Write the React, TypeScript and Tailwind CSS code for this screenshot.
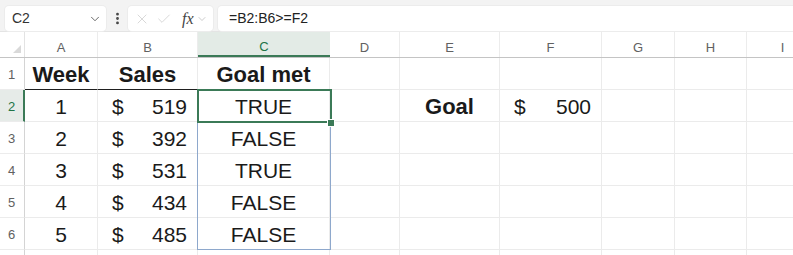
import React from "react";
import { ChevronDown, EllipsisVertical, X, Check } from "lucide-react";

const cols = [
  { key: "A", w: "w-[73px]" },
  { key: "B", w: "w-[100px]" },
  { key: "C", w: "w-[132px]" },
  { key: "D", w: "w-[70px]" },
  { key: "E", w: "w-[100px]" },
  { key: "F", w: "w-[102px]" },
  { key: "G", w: "w-[73px]" },
  { key: "H", w: "w-[72px]" },
  { key: "I", w: "w-[72px]" },
];

const data = [
  [1, 519, "TRUE"],
  [2, 392, "FALSE"],
  [3, 531, "TRUE"],
  [4, 434, "FALSE"],
  [5, 485, "FALSE"],
];

const Money = ({ v }: { v: number }) => (
  <div className="flex h-full items-center justify-between pl-[14px] pr-[10px] pt-[2px]">
    <span>$</span>
    <span>{v}</span>
  </div>
);

const Cell = ({
  w,
  children,
  className = "",
}: {
  w: string;
  children?: React.ReactNode;
  className?: string;
}) => (
  <div className={`${w} shrink-0 h-full border-r border-b border-[#ebebeb] ${className}`}>
    {children}
  </div>
);

const RowHead = ({ n, active }: { n?: number; active?: boolean }) => (
  <div
    className={`w-[25px] shrink-0 h-full flex items-center pl-[8px] pt-[3px] text-[13px] ${
      active
        ? "bg-[#e6ebe8] text-[#217346] border-r-2 border-[#3b7a57]"
        : "text-[#616161] border-r border-[#d4d4d4]"
    } border-b border-b-[#ececec]`}
  >
    {n}
  </div>
);

export default function App() {
  return (
    <div className="w-[793px] h-[255px] overflow-hidden bg-white font-['Liberation_Sans',Arial,sans-serif] text-[#1a1a1a]">
      {/* formula bar */}
      <div className="h-[32px] bg-[#f3f3f3] pt-[6px] flex items-start border-b border-[#e4e4e4]">
        <div className="ml-[5px] w-[101px] h-[25px] rounded-[4px] bg-white shadow-[0_0_0_1px_#ececec] flex items-center justify-between pl-[7px] pr-[4px]">
          <span className="text-[14px] text-[#333]">C2</span>
          <ChevronDown size={14} strokeWidth={1.5} className="text-[#555]" />
        </div>
        <div className="w-[22px] h-[25px] flex items-center justify-center">
          <EllipsisVertical size={15} strokeWidth={2.5} className="text-[#444]" />
        </div>
        <div className="w-[85px] h-[25px] rounded-[4px] bg-white shadow-[0_0_0_1px_#ececec] flex items-center pl-[6px] gap-[6px]">
          <X size={16} strokeWidth={1} className="text-[#c4c4c4]" />
          <Check size={16} strokeWidth={1} className="text-[#c4c4c4]" />
          <span className="ml-[4px] font-['Liberation_Serif',serif] italic text-[16px] text-[#444]">
            fx
          </span>
          <ChevronDown size={12} strokeWidth={1.2} className="-ml-[4px] text-[#aaa]" />
        </div>
        <div className="ml-[5px] flex-1 h-[25px] rounded-l-[4px] bg-white shadow-[0_0_0_1px_#ececec] flex items-center pl-[11px]">
          <span className="text-[14px] text-[#222]">=B2:B6&gt;=F2</span>
        </div>
      </div>

      {/* column headers */}
      <div className="flex h-[26px] border-b border-[#c4c4c4]">
        <div className="w-[25px] shrink-0 h-full flex items-end justify-end pr-[3px] pb-[4px] border-r border-[#e3e3e3]">
          <svg width="8" height="8" viewBox="0 0 8 8">
            <path d="M8 0 L8 8 L0 8 Z" fill="#d9d9d9" />
          </svg>
        </div>
        {cols.map((c) => (
          <div
            key={c.key}
            className={`${c.w} shrink-0 h-full flex items-center justify-center pt-[7px] text-[13px] ${
              c.key === "C"
                ? "bg-[#e3ebe6] text-[#217346] border-b-2 border-[#3b7a57] -mb-[1px]"
                : "text-[#616161] border-r border-[#ececec]"
            }`}
          >
            {c.key}
          </div>
        ))}
      </div>

      {/* body */}
      <div className="relative">
        {/* row 1 */}
        <div className="flex h-[32px]">
          <RowHead n={1} />
          <Cell w="w-[73px]" className="border-b-[#1f1f1f] flex items-center justify-center pt-[2px] text-[22px] font-bold">
            Week
          </Cell>
          <Cell w="w-[100px]" className="border-b-[#1f1f1f] flex items-center justify-center pt-[2px] text-[22px] font-bold">
            Sales
          </Cell>
          <Cell w="w-[132px]" className="border-b-[#1f1f1f] flex items-center justify-center pt-[2px] text-[22px] font-bold">
            Goal met
          </Cell>
          {cols.slice(3).map((c) => (
            <Cell key={c.key} w={c.w} />
          ))}
        </div>

        {data.map((r, i) => (
          <div key={i} className="flex h-[32px] text-[21px]">
            <RowHead n={i + 2} active={i === 0} />
            <Cell w="w-[73px]" className="flex items-center justify-center pt-[2px]">
              {r[0]}
            </Cell>
            <Cell w="w-[100px]">
              <Money v={r[1] as number} />
            </Cell>
            <Cell w="w-[132px]" className="flex items-center justify-center pt-[2px]">
              {r[2]}
            </Cell>
            <Cell w="w-[70px]" />
            <Cell w="w-[100px]" className="flex items-center justify-center pt-[2px] text-[22px] font-bold">
              {i === 0 ? "Goal" : null}
            </Cell>
            <Cell w="w-[102px]">{i === 0 ? <Money v={500} /> : null}</Cell>
            <Cell w="w-[73px]" />
            <Cell w="w-[72px]" />
            <Cell w="w-[72px]" />
          </div>
        ))}

        {/* row 7, mostly off screen */}
        <div className="flex h-[32px]">
          <RowHead />
          {cols.map((c) => (
            <Cell key={c.key} w={c.w} />
          ))}
        </div>

        {/* spill range C2:C6 */}
        <div className="absolute left-[197px] top-[31px] w-[134px] h-[161px] border border-[#8ea8cc] pointer-events-none" />
        {/* active cell C2 */}
        <div className="absolute left-[197px] top-[31px] w-[135px] h-[34px] border-2 border-[#3b7a57] pointer-events-none" />
        <div className="absolute left-[328px] top-[62px] w-[6px] h-[6px] bg-[#3b7a57] ring-1 ring-white" />
      </div>
    </div>
  );
}
